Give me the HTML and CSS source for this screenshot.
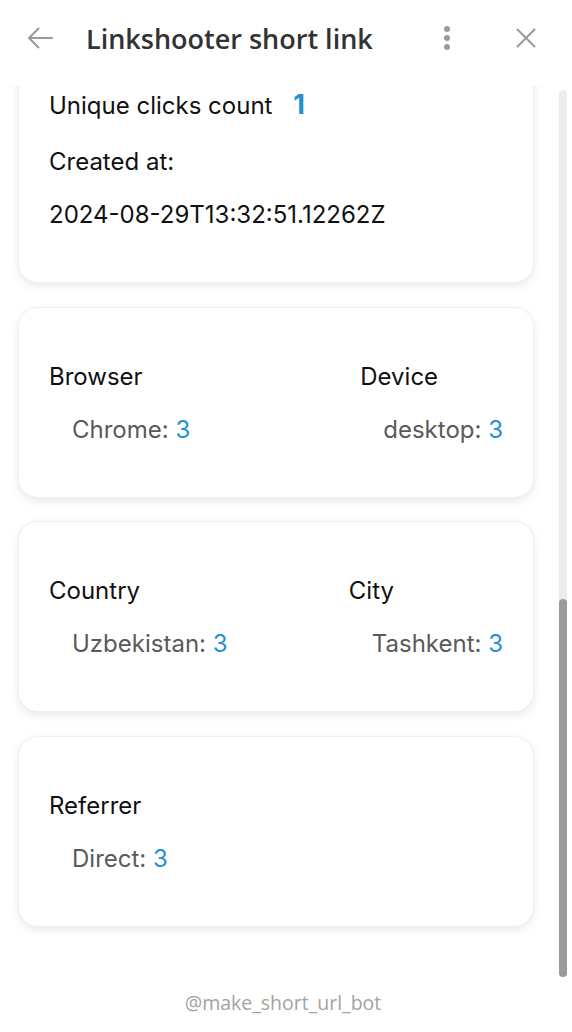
FILE: index.html
```html
<!DOCTYPE html>
<html lang="en">
<head>
<meta charset="utf-8">
<title>Linkshooter short link</title>
<link rel="stylesheet" href="styles.css">
</head>
<body>
<div class="window">
  <header class="topbar">
    <button class="icon-btn back" aria-label="Back">
      <svg width="26" height="22" viewBox="0 0 26 22"><path d="M25 11H2M11.5 1.5L2 11l9.5 9.5" fill="none" stroke="#9a9a9a" stroke-width="2" stroke-linecap="round" stroke-linejoin="round"/></svg>
    </button>
    <h1 class="title">Linkshooter short link</h1>
    <button class="icon-btn more" aria-label="More">
      <svg width="6" height="24" viewBox="0 0 6 24"><circle cx="3" cy="3" r="3" fill="#9a9a9a"/><circle cx="3" cy="12" r="3" fill="#9a9a9a"/><circle cx="3" cy="21" r="3" fill="#9a9a9a"/></svg>
    </button>
    <button class="icon-btn close" aria-label="Close">
      <svg width="20" height="20" viewBox="0 0 20 20"><path d="M1.5 1.5l17 17M18.5 1.5l-17 17" fill="none" stroke="#9a9a9a" stroke-width="2" stroke-linecap="round"/></svg>
    </button>
  </header>

  <div class="viewport">
    <div class="scroller">
      <div class="content">
        <section class="card">
          <p class="row row-lg">Unique clicks count <span class="big-value">1</span></p>
          <p class="row">Created at:</p>
          <p class="row">2024-08-29T13:32:51.12262Z</p>
        </section>

        <section class="card split">
          <div class="col">
            <h3 class="col-title">Browser</h3>
            <p class="item">Chrome: <span class="value">3</span></p>
          </div>
          <div class="col">
            <h3 class="col-title">Device</h3>
            <p class="item">desktop: <span class="value">3</span></p>
          </div>
        </section>

        <section class="card split">
          <div class="col">
            <h3 class="col-title">Country</h3>
            <p class="item">Uzbekistan: <span class="value">3</span></p>
          </div>
          <div class="col">
            <h3 class="col-title">City</h3>
            <p class="item">Tashkent: <span class="value">3</span></p>
          </div>
        </section>

        <section class="card split">
          <div class="col">
            <h3 class="col-title">Referrer</h3>
            <p class="item">Direct: <span class="value">3</span></p>
          </div>
        </section>
      </div>
    </div>
    <div class="scrollbar">
      <div class="track"><div class="thumb"></div></div>
    </div>
  </div>

  <footer class="footer">@make_short_url_bot</footer>
</div>
</body>
</html>
```

FILE: styles.css
```css
* { box-sizing: border-box; }

html, body {
  margin: 0;
  padding: 0;
  background: #ffffff;
}

body {
  font-family: Inter, "Noto Sans", sans-serif;
  color: #000;
}

.window {
  width: 572px;
  height: 1032px;
  display: flex;
  flex-direction: column;
  overflow: hidden;
  background: #fff;
}

/* ---------- header ---------- */
.topbar {
  height: 86px;
  flex: none;
  display: flex;
  align-items: center;
  padding: 0 0 10px 27px;
  background: #fff;
}

.icon-btn {
  border: 0;
  background: none;
  padding: 0;
  display: flex;
  align-items: center;
  justify-content: center;
}

.back { width: 26px; height: 22px; }

.title {
  flex: 1;
  margin: 0 0 0 33px;
  font-family: "Open Sans", sans-serif;
  font-weight: 600;
  font-size: 27px;
  line-height: 1;
  color: #333;
  padding-top: 0;
}

.more { width: 6px; height: 24px; margin-right: 66px; }
.close { width: 20px; height: 20px; margin-right: 36px; }

/* ---------- content ---------- */
.viewport {
  height: 891px;
  flex: none;
  display: flex;
}

.scroller {
  flex: 1;
  overflow: hidden;
}

.content {
  margin-top: -54px;
  padding: 0 18px;
  display: flex;
  flex-direction: column;
  gap: 23.5px;
}

.card {
  background: #fff;
  border: 1px solid #f0f0f0;
  border-radius: 20px;
  box-shadow: 0 3px 10px rgba(0, 0, 0, 0.09);
  padding: 54px 30px 53px 30px;
  display: flex;
  flex-direction: column;
  gap: 24px;
}

.card.split {
  flex-direction: row;
  justify-content: space-between;
}

.row {
  margin: 0;
  font-size: 24px;
  line-height: 29px;
  color: #111;
}

.row-lg { line-height: 35px; }

.big-value {
  margin-left: 14px;
  font-size: 27px;
  font-weight: 700;
  color: #2290d6;
}

.col {
  display: flex;
  flex-direction: column;
  gap: 24px;
}

.col-title {
  margin: 0;
  font-size: 24px;
  line-height: 29px;
  font-weight: 400;
  color: #111;
}

.item {
  margin: 0;
  padding-left: 23px;
  font-size: 24px;
  line-height: 29px;
  color: #5a5a5a;
}

.value { color: #2290d6; }

/* ---------- scrollbar ---------- */
.scrollbar {
  width: 20px;
  flex: none;
  padding: 4px 5px 0 7px;
  display: flex;
}

.track {
  flex: 1;
  background: #ececec;
  border-radius: 4px;
  display: flex;
  flex-direction: column;
  justify-content: flex-end;
}

.thumb {
  height: 378px;
  background: #9a9a9a;
  border-radius: 4px;
}

/* ---------- footer ---------- */
.footer {
  flex: 1;
  display: flex;
  align-items: center;
  justify-content: center;
  padding: 0 6px 5px 0;
  font-family: "Open Sans", sans-serif;
  font-size: 19.5px;
  color: #a3a3a3;
}
```
